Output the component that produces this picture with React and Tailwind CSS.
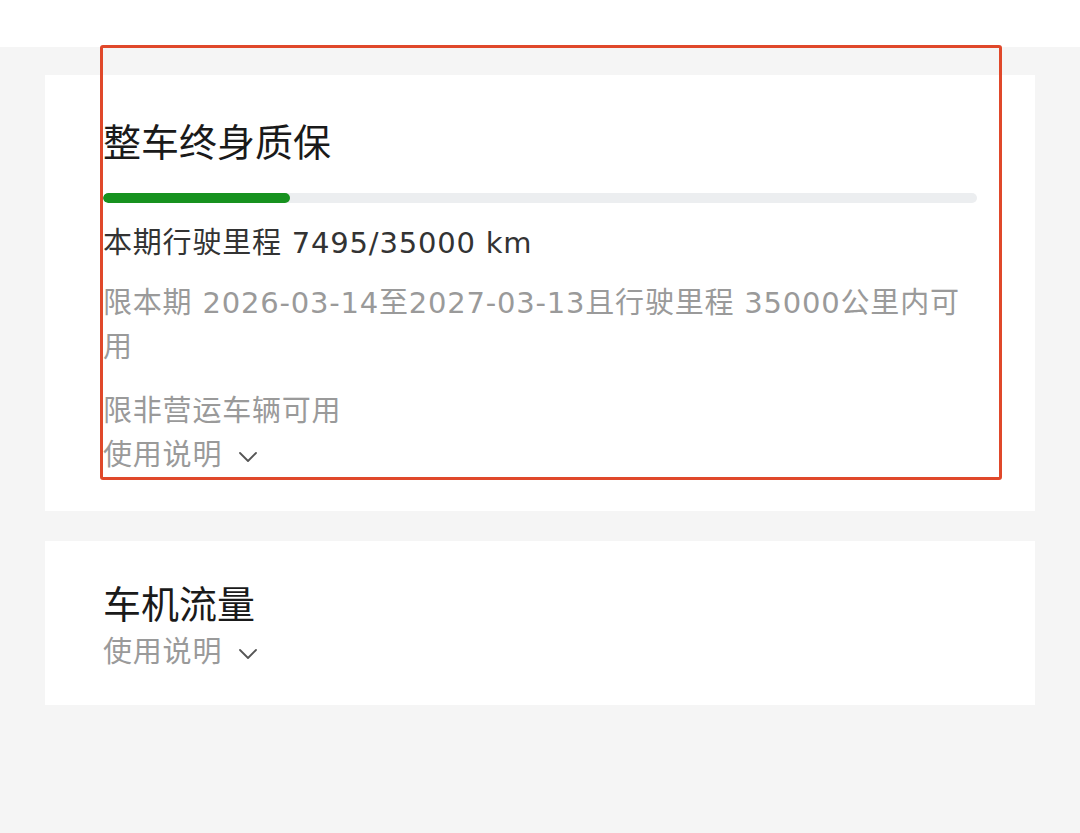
const font = { fontFamily: '"Noto Sans CJK SC", "Noto Sans", sans-serif' };
const body = { fontFamily: '"DejaVu Sans", "Noto Sans CJK SC", sans-serif', letterSpacing: '0.8px' };

const Chevron = () => (
  <svg width="20" height="12" viewBox="0 0 20 12" className="ml-[16px] mt-1" fill="none">
    <path d="M2 2 L10 10 L18 2" stroke="#555" strokeWidth="1.8" strokeLinecap="round" strokeLinejoin="round" />
  </svg>
);

const Guide = () => (
  <div className="flex items-center text-[29px] leading-[44px] text-[#9a9a9a]" style={body}>
    <span>使用说明</span>
    <Chevron />
  </div>
);

export default function App() {
  const used = 7495;
  const total = 35000;
  return (
    <div className="relative min-h-[833px] w-[1080px] bg-[#f5f5f5]" style={font}>
      <div className="h-[47px] bg-white" />
      <div className="px-[45px] pt-[28px] flex flex-col gap-[30px]">
        {/* warranty card */}
        <div className="bg-white px-[58px] pt-[43px] pb-[34px]">
          <h2 className="text-[38px] leading-[44px] text-[#1a1a1a]">整车终身质保</h2>
          <div className="mt-[31px] h-[10px] w-full rounded-full bg-[#eceef0] overflow-hidden">
            <div className="h-full rounded-full bg-[#17921f]" style={{ width: `${(used / total) * 100}%` }} />
          </div>
          <div style={body}>
            <p className="mt-[18px] text-[29px] leading-[44px] text-[#333]">本期行驶里程 7495/35000 km</p>
            <p className="mt-[16px] text-[29px] leading-[44px] text-[#9a9a9a]">
              限本期 2026-03-14至2027-03-13且行驶里程 35000公里内可用
            </p>
            <p className="mt-[20px] text-[29px] leading-[44px] text-[#9a9a9a]">限非营运车辆可用</p>
          </div>
          <Guide />
        </div>
        {/* data card */}
        <div className="bg-white px-[58px] pt-[33px] pb-[31px]">
          <h2 className="text-[38px] leading-[56px] text-[#1a1a1a]">车机流量</h2>
          <Guide />
        </div>
      </div>
      {/* annotation box */}
      <div className="absolute left-[100px] top-[45px] w-[902px] h-[435px] border-[3px] border-[#e0482a] rounded-[3px]" />
    </div>
  );
}
